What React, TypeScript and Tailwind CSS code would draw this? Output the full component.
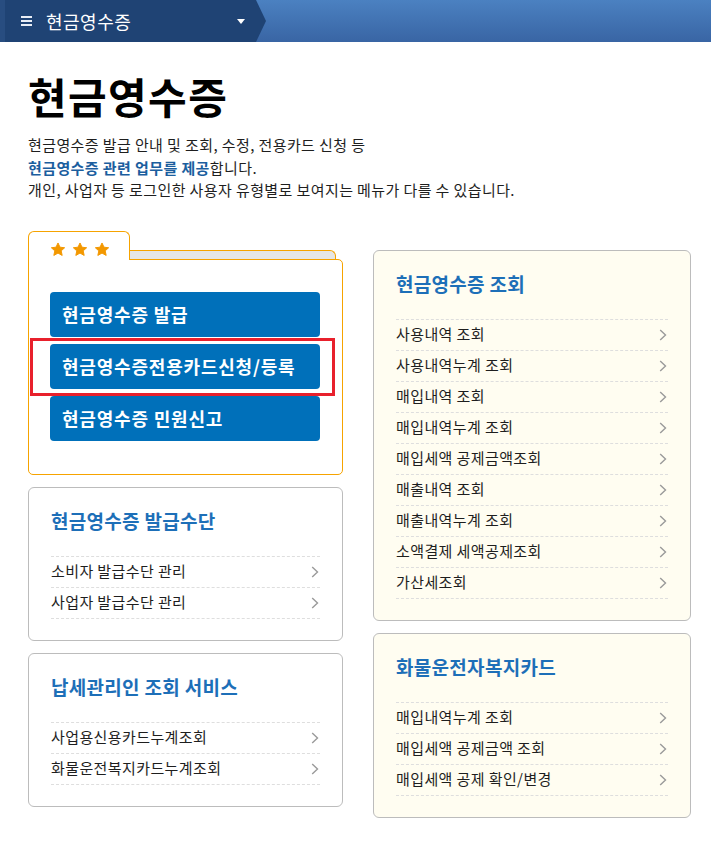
import type { ReactNode } from "react";

const FONT = "font-['Noto_Sans_CJK_KR','Noto_Sans',sans-serif]";

const cashItems = [
  "사용내역 조회",
  "사용내역누계 조회",
  "매입내역 조회",
  "매입내역누계 조회",
  "매입세액 공제금액조회",
  "매출내역 조회",
  "매출내역누계 조회",
  "소액결제 세액공제조회",
  "가산세조회",
];

const truckItems = ["매입내역누계 조회", "매입세액 공제금액 조회", "매입세액 공제 확인/변경"];

function Chevron() {
  return (
    <svg width="8" height="12" viewBox="0 0 8 12" className="flex-shrink-0">
      <path d="M1.2 1 L6.5 6 L1.2 11" fill="none" stroke="#9a9a9a" strokeWidth="1.4" />
    </svg>
  );
}

function Star() {
  return (
    <svg width="16" height="15" viewBox="0 0 24 23">
      <path
        d="M12 1.5 L15.1 8 L22.2 8.8 L16.9 13.6 L18.4 20.6 L12 17 L5.6 20.6 L7.1 13.6 L1.8 8.8 L8.9 8 Z"
        fill="#f39800"
        stroke="#f39800"
        strokeWidth="1.5"
        strokeLinejoin="round"
      />
    </svg>
  );
}

function MenuCard({
  title,
  items,
  tint,
}: {
  title: string;
  items: string[];
  tint?: boolean;
}) {
  return (
    <section
      className={`border border-[#bcbcbc] rounded-[6px] px-[22px] pt-[20px] pb-[21px] ${
        tint ? "bg-[#fffdf1]" : "bg-white"
      }`}
    >
      <h2 className="text-[19px] leading-[26px] font-bold tracking-[0.3px] text-[#1d6fb8]">{title}</h2>
      <ul className="mt-[22px] border-t border-dashed border-[#dedede]">
        {items.map((item) => (
          <li
            key={item}
            className="h-[31px] border-b border-dashed border-[#dedede] flex items-center justify-between pr-[1px]"
          >
            <span className="text-[15px] tracking-[0.4px] text-[#1e1e1e]">{item}</span>
            <Chevron />
          </li>
        ))}
      </ul>
    </section>
  );
}

function BlueButton({ children }: { children: ReactNode }) {
  return (
    <div className="h-[45px] rounded-[4px] bg-[#0070ba] flex items-center px-[12px] text-[18px] font-bold tracking-[0.8px] text-white">
      {children}
    </div>
  );
}

function StarCard() {
  return (
    <div>
      <div className="flex items-end">
        <div className="relative z-10 w-[102px] h-[29px] -mb-[1px] bg-white border border-b-0 border-[#f6a300] rounded-t-[6px] flex items-end gap-[6px] pl-[21px] pb-[3px]">
          <Star />
          <Star />
          <Star />
        </div>
        <div className="flex-1 h-[9px] -ml-[1px] mr-[7px] bg-[#e6e6e6] border border-b-0 border-[#f6a300] rounded-tr-[6px]" />
      </div>
      <div className="border border-[#f6a300] rounded-tr-[5px] rounded-b-[5px] bg-white pl-[21px] pr-[22px] pt-[32px] pb-[33px] flex flex-col gap-[7px]">
        <BlueButton>현금영수증 발급</BlueButton>
        <div className="relative">
          <BlueButton>현금영수증전용카드신청/등록</BlueButton>
          <div className="absolute -top-[6px] -left-[20px] -right-[15px] -bottom-[7px] border-[3px] border-[#e8202c] pointer-events-none" />
        </div>
        <BlueButton>현금영수증 민원신고</BlueButton>
      </div>
    </div>
  );
}

export default function App() {
  return (
    <div className={`w-full min-h-[841px] bg-white ${FONT} text-[#1e1e1e]`}>
      <header className="h-[42px] flex bg-gradient-to-b from-[#4b81c1] to-[#3965a4]">
        <div className="w-[266px] h-full bg-[#1f4374] border-l-[5px] border-l-[#284d80] [clip-path:polygon(0_0,256px_0,266px_50%,256px_100%,0_100%)] flex items-center pl-[16px]">
          <svg width="11" height="10" viewBox="0 0 11 10" className="mr-[14px]">
            <rect x="0" y="0" width="11" height="2" fill="#e8edf5" />
            <rect x="0" y="4" width="11" height="2" fill="#e8edf5" />
            <rect x="0" y="8" width="11" height="2" fill="#e8edf5" />
          </svg>
          <span className="text-[18px] tracking-[0.5px] text-white leading-none">현금영수증</span>
          <svg width="8" height="5" viewBox="0 0 8 5" className="ml-auto mr-[21px]">
            <path d="M0 0 H8 L4 5 Z" fill="#ffffff" />
          </svg>
        </div>
      </header>

      <main className="px-[28px]">
        <h1 className="mt-[29px] text-[42px] leading-[50px] font-bold tracking-[1.4px] text-black">현금영수증</h1>
        <div className="mt-[13px] text-[15px] leading-[22.5px] tracking-[0.4px] text-[#1e1e1e]">
          <p>현금영수증 발급 안내 및 조회, 수정, 전용카드 신청 등</p>
          <p>
            <span className="font-bold text-[#1b5e9e]">현금영수증 관련 업무를 제공</span>합니다.
          </p>
          <p>개인, 사업자 등 로그인한 사용자 유형별로 보여지는 메뉴가 다를 수 있습니다.</p>
        </div>

        <div className="mt-[29px] grid grid-cols-[315px_318px] gap-x-[30px] items-start pb-[24px]">
          <div className="flex flex-col gap-[12px]">
            <StarCard />
            <MenuCard title="현금영수증 발급수단" items={["소비자 발급수단 관리", "사업자 발급수단 관리"]} />
            <MenuCard
              title="납세관리인 조회 서비스"
              items={["사업용신용카드누계조회", "화물운전복지카드누계조회"]}
            />
          </div>
          <div className="mt-[19px] flex flex-col gap-[12px]">
            <MenuCard title="현금영수증 조회" items={cashItems} tint />
            <MenuCard title="화물운전자복지카드" items={truckItems} tint />
          </div>
        </div>
      </main>
    </div>
  );
}
